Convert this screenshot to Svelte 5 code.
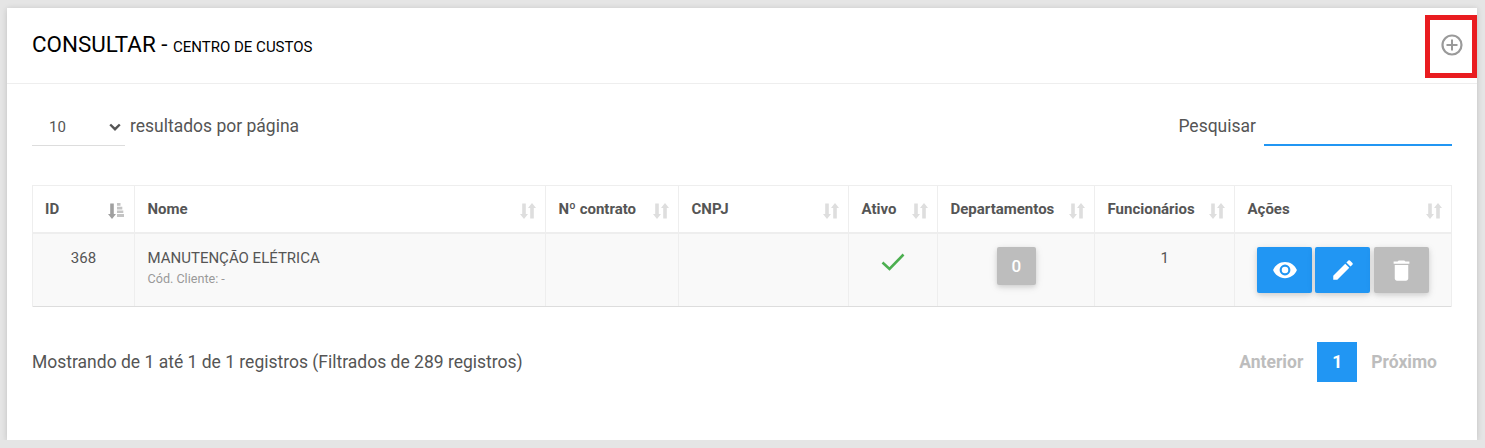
<script lang="ts">
  const columns = [
    { label: "ID", width: 102, sorted: true },
    { label: "Nome", width: 411 },
    { label: "Nº contrato", width: 133 },
    { label: "CNPJ", width: 170 },
    { label: "Ativo", width: 89 },
    { label: "Departamentos", width: 157 },
    { label: "Funcionários", width: 140 },
    { label: "Ações", width: 216 },
  ];
</script>

{#snippet sortIcon(sorted: boolean)}
  <svg class="sort" class:sorted width="16" height="16" viewBox="0 0 16 16" aria-hidden="true">
    {#if sorted}
      <path d="M2.200 .5h3.600V11H8l-4 5-4-5h2.200z" fill="#a0a0a0" />
      <path d="M9 0h3.500v2.700H9zM9 3.700h5.300v2.700H9zM9 7.400h6.300V10H9zM9 11h7v3H9z" fill="#c4c4c4" />
    {:else}
      <path d="M2.200 .5h3.600V11H8l-4 5-4-5h2.200z" fill="#dedede" />
      <path d="M12 0l4 5h-2.200v10.500h-3.600V5H8z" fill="#dedede" />
    {/if}
  </svg>
{/snippet}

<div class="card">
  <header class="card-header">
    <h2>CONSULTAR - <small>CENTRO DE CUSTOS</small></h2>
    <svg class="add" width="24" height="24" viewBox="0 0 24 24" aria-hidden="true">
      <circle cx="12" cy="12" r="9.500" fill="none" stroke="#9a9a9a" stroke-width="2.200" />
      <path d="M12 6.500v11M6.500 12h11" stroke="#9a9a9a" stroke-width="2" />
    </svg>
  </header>
  <div class="highlight"></div>

  <div class="card-body">
    <div class="controls">
      <div class="length">
        <div class="select">
          <span>10</span>
          <svg width="12" height="8" viewBox="0 0 12 8" aria-hidden="true">
            <path d="M1.200 1.500 6 6.200l4.800-4.700" fill="none" stroke="#555" stroke-width="2.400" />
          </svg>
        </div>
        <span class="label">resultados por página</span>
      </div>
      <div class="search">
        <span class="label">Pesquisar</span>
        <div class="search-input"></div>
      </div>
    </div>

    <div class="table">
      <div class="row head">
        {#each columns as col}
          <div class="cell" style="width: {col.width}px">
            <span>{col.label}</span>
            {@render sortIcon(!!col.sorted)}
          </div>
        {/each}
      </div>
      <div class="row body-row">
        <div class="cell id" style="width: 102px">368</div>
        <div class="cell name" style="width: 411px">
          <span>MANUTENÇÃO ELÉTRICA</span>
          <small>Cód. Cliente: -</small>
        </div>
        <div class="cell" style="width: 133px"></div>
        <div class="cell" style="width: 170px"></div>
        <div class="cell center" style="width: 89px">
          <svg class="check" width="24" height="18" viewBox="0 0 24 18" aria-hidden="true">
            <path d="M1.500 9.500 8.500 16 22.500 1.500" fill="none" stroke="#4caf50" stroke-width="2.600" />
          </svg>
        </div>
        <div class="cell center" style="width: 157px">
          <span class="btn gray count">0</span>
        </div>
        <div class="cell center total" style="width: 140px">1</div>
        <div class="cell actions" style="width: 216px">
          <span class="btn blue wide">
            <svg width="26" height="26" viewBox="0 0 24 24" aria-hidden="true">
              <path fill="#fff" d="M12 4.500C7 4.500 2.700 7.600 1 12c1.700 4.400 6 7.500 11 7.500s9.300-3.100 11-7.500c-1.700-4.400-6-7.500-11-7.500zM12 17a5 5 0 1 1 0-10 5 5 0 0 1 0 10zm0-8a3 3 0 1 0 0 6 3 3 0 0 0 0-6z" />
            </svg>
          </span>
          <span class="btn blue wide">
            <svg width="26" height="26" viewBox="0 0 24 24" aria-hidden="true">
              <path fill="#fff" d="M3 17.250V21h3.750L17.810 9.940l-3.750-3.750L3 17.250zM20.710 7.040a1 1 0 0 0 0-1.410l-2.340-2.340a1 1 0 0 0-1.410 0l-1.830 1.830 3.750 3.750 1.830-1.830z" />
            </svg>
          </span>
          <span class="btn gray wide trash">
            <svg width="27" height="27" viewBox="0 0 24 24" aria-hidden="true">
              <path fill="#fff" d="M6 19c0 1.100.9 2 2 2h8c1.100 0 2-.9 2-2V7H6v12zM19 4h-3.500l-1-1h-5l-1 1H5v2h14V4z" />
            </svg>
          </span>
        </div>
      </div>
    </div>

    <div class="footer">
      <span class="label">Mostrando de 1 até 1 de 1 registros (Filtrados de 289 registros)</span>
      <nav class="pager">
        <span>Anterior</span>
        <span class="current">1</span>
        <span>Próximo</span>
      </nav>
    </div>
  </div>
</div>

<style>
  :global(body) {
    background: #e5e5e5;
    font-family: Roboto, "Liberation Sans", sans-serif;
    color: #555;
  }

  .card {
    position: relative;
    box-sizing: border-box;
    width: 1470px;
    height: 432px;
    margin: 8px 0 0 7px;
    background: #fff;
    box-shadow: 0 1px 6px rgba(0, 0, 0, 0.16);
  }

  .card-header {
    display: flex;
    align-items: center;
    justify-content: space-between;
    box-sizing: border-box;
    height: 76px;
    padding: 0 13px 4px 25px;
    border-bottom: 1px solid #eee;
  }

  h2 {
    margin: 0;
    font-size: 22.400px;
    font-weight: 400;
    color: #000;
  }

  h2 small {
    font-size: 15px;
  }

  .add {
    margin-top: 3px;
  }

  .highlight {
    position: absolute;
    top: 7px;
    right: 0;
    box-sizing: border-box;
    width: 52px;
    height: 63px;
    border: 5px solid #e91c20;
  }

  .card-body {
    padding: 0 25px;
  }

  .controls {
    display: flex;
    align-items: flex-start;
    justify-content: space-between;
    height: 101px;
    padding-top: 24px;
    box-sizing: border-box;
  }

  .label {
    font-size: 17.500px;
  }

  .length,
  .search {
    display: flex;
    align-items: center;
    height: 38px;
  }

  .length {
    gap: 5px;
  }

  .select {
    display: flex;
    align-items: center;
    justify-content: space-between;
    box-sizing: border-box;
    width: 93px;
    height: 38px;
    padding: 0 4px 0 17px;
    border-bottom: 1px solid #ddd;
    font-size: 15px;
  }

  .length .label,
  .search .label {
    margin-top: -3px;
  }

  .search {
    gap: 8px;
  }

  .search-input {
    box-sizing: border-box;
    width: 188px;
    height: 38px;
    border-bottom: 2px solid #2196f3;
  }

  .table {
    width: 1420px;
    border: 1px solid #eee;
    border-bottom: 0;
    box-sizing: border-box;
  }

  .row {
    display: flex;
    box-sizing: border-box;
  }

  .cell {
    flex: none;
    box-sizing: border-box;
    border-right: 1px solid #eee;
    padding: 0 12px 0 12.500px;
    font-size: 15px;
  }

  .cell:first-child {
    padding-left: 12px;
  }

  .cell:last-child {
    border-right: 0;
  }

  .head {
    height: 48px;
    border-bottom: 2px solid #eee;
  }

  .head .cell {
    display: flex;
    align-items: center;
    justify-content: space-between;
    padding-bottom: 1px;
    font-weight: 700;
  }

  .sort {
    flex: none;
    margin-right: -3px;
    margin-top: 4px;
  }

  .sort.sorted {
    margin-right: -2px;
  }

  .body-row {
    height: 73px;
    background: #f9f9f9;
    border-bottom: 1px solid #ddd;
  }

  .id,
  .total {
    padding-top: 15px;
    text-align: center;
  }

  .name {
    display: flex;
    flex-direction: column;
    gap: 4px;
    padding-top: 15px;
  }

  .name small {
    font-size: 12.600px;
    color: #999;
  }

  .center {
    display: flex;
    justify-content: center;
    align-items: flex-start;
  }

  .check {
    margin-top: 19px;
  }

  .btn {
    display: flex;
    align-items: center;
    justify-content: center;
    border-radius: 2px;
    color: #fff;
    box-shadow: 0 2px 5px rgba(0, 0, 0, 0.12), 0 2px 10px rgba(0, 0, 0, 0.08);
  }

  .blue {
    background: #2196f3;
  }

  .gray {
    background: #bdbdbd;
  }

  .count {
    width: 39px;
    height: 38px;
    margin-top: 13px;
    font-size: 17px;
    font-weight: 500;
  }

  .actions {
    display: flex;
    align-items: flex-start;
    gap: 3px;
    padding: 13px 0 0 22px;
  }

  .wide {
    width: 55px;
    height: 46px;
  }

  .trash {
    margin-left: 1px;
  }

  .footer {
    display: flex;
    align-items: center;
    justify-content: space-between;
    margin-top: 35px;
    height: 40px;
  }

  .pager {
    display: flex;
    align-items: center;
    margin-right: 1px;
    color: #bdbdbd;
    font-size: 17.500px;
    font-weight: 700;
  }

  .pager span {
    padding: 0 14px;
    line-height: 40px;
  }

  .pager .current {
    width: 40px;
    box-sizing: border-box;
    padding: 0;
    text-align: center;
    background: #2196f3;
    color: #fff;
  }
</style>
